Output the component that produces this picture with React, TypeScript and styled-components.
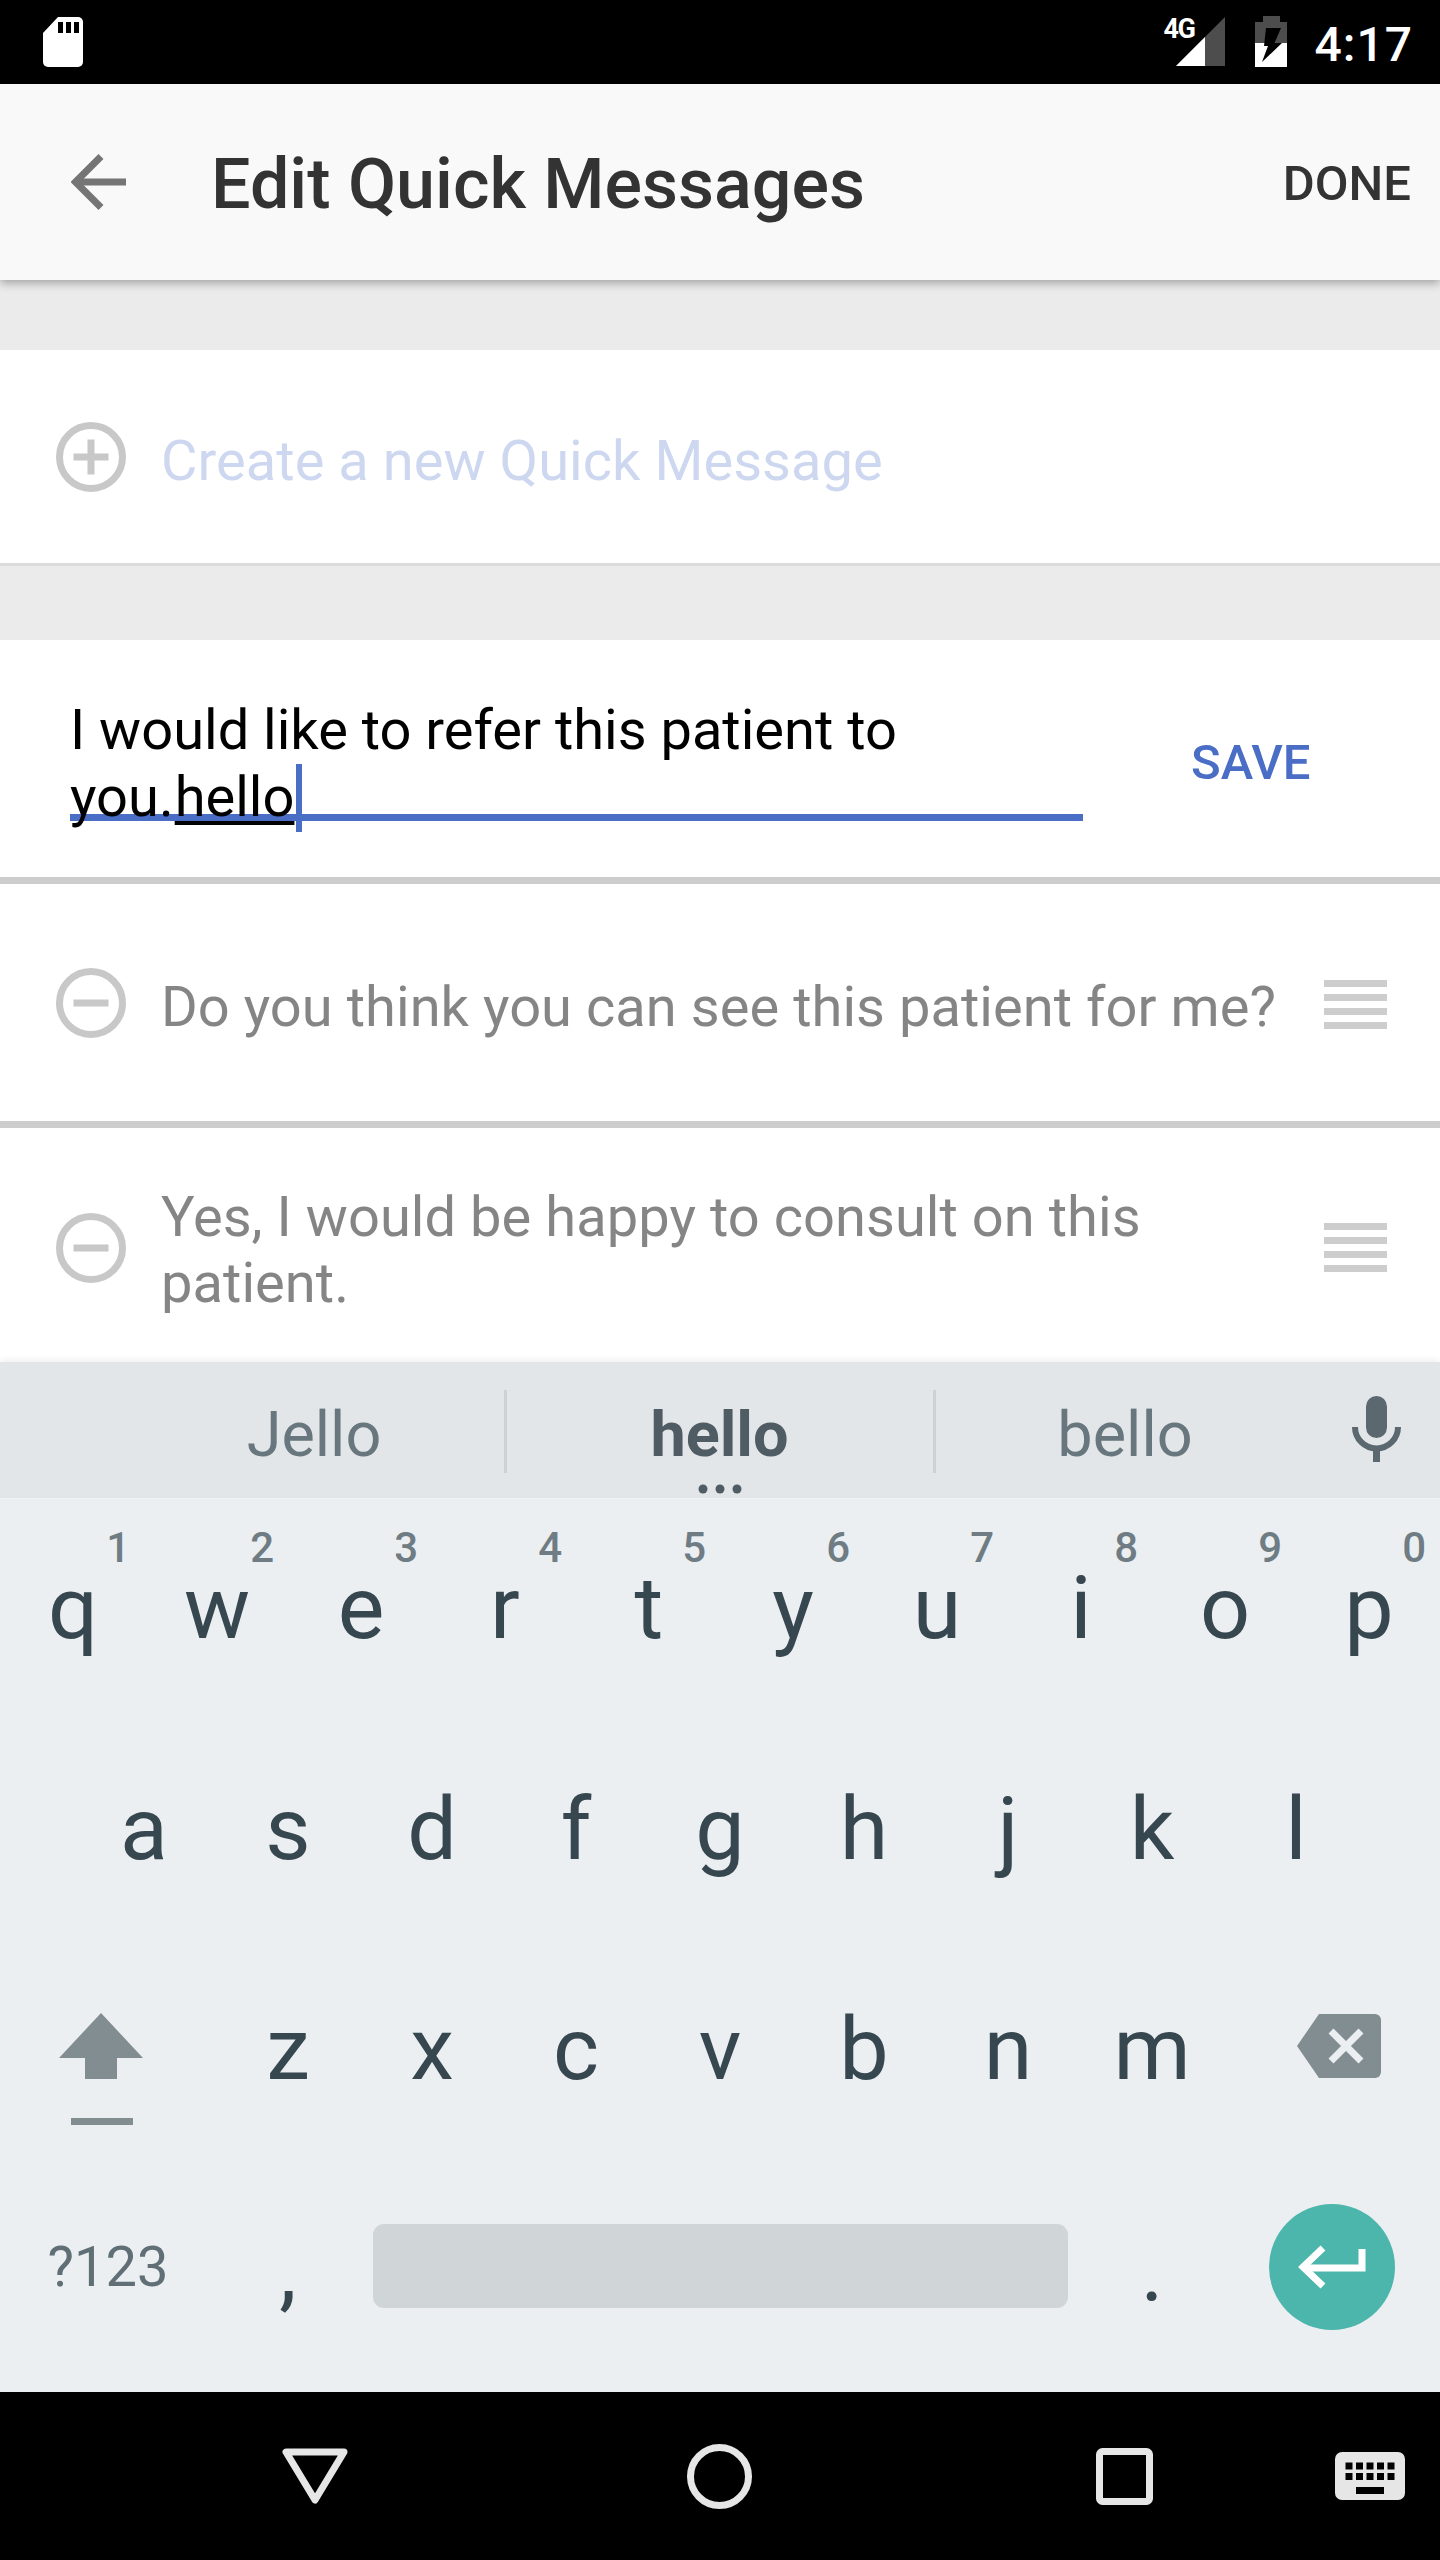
import React from "react";
import styled, { createGlobalStyle } from "styled-components";

const Global = createGlobalStyle`
  html, body { margin: 0; padding: 0; background: #fff; }
  * { box-sizing: border-box; }
`;

const Screen = styled.div`
  width: 1440px;
  height: 2560px;
  display: flex;
  flex-direction: column;
  overflow: hidden;
  background: #ebebeb;
  font-family: Roboto, "Liberation Sans", sans-serif;
`;

const StatusBar = styled.div`
  flex: 0 0 84px;
  display: flex;
  align-items: flex-start;
  padding: 16px 27px 0 43px;
  background: #000;
  color: #fff;
`;

const StatusRight = styled.div`
  margin-left: auto;
  display: flex;
  align-items: flex-start;
`;

const SignalWrap = styled.div`
  position: relative;
  width: 49px;
  height: 50px;
  margin-top: 1px;
  margin-right: 30px;
`;

const NetworkLabel = styled.span`
  position: absolute;
  left: -12px;
  top: -1px;
  font-size: 27px;
  line-height: 26px;
  font-weight: 700;
  letter-spacing: -1.5px;
  color: #fff;
`;

const Clock = styled.span`
  margin-left: 28px;
  margin-top: 1px;
  font-size: 48px;
  line-height: 56px;
  font-weight: 500;
  letter-spacing: 1px;
`;

const Toolbar = styled.header`
  flex: 0 0 196px;
  display: flex;
  align-items: center;
  padding: 0 29px 0 71px;
  background: #f9f9f9;
  position: relative;
  z-index: 2;
  box-shadow: 0 3px 9px rgba(0, 0, 0, 0.32);
`;

const Title = styled.h1`
  margin: 4px 0 0 85px;
  font-size: 70px;
  line-height: 82px;
  font-weight: 500;
  color: #333;
`;

const Done = styled.span`
  margin: 3px 0 0 auto;
  font-size: 49px;
  line-height: 58px;
  font-weight: 500;
  color: #333;
`;

const Band = styled.div<{ $h: number }>`
  flex: 0 0 ${(p) => p.$h}px;
  background: #ebebeb;
`;

const Row = styled.div<{ $h: number; $line: number; $lineColor: string }>`
  flex: 0 0 ${(p) => p.$h + p.$line}px;
  display: flex;
  align-items: center;
  padding: 0 53px 0 56px;
  background: #fff;
  border-bottom: ${(p) => p.$line}px solid ${(p) => p.$lineColor};
`;

const ClippedRow = styled(Row)`
  align-items: flex-start;
  padding-top: 85px;
`;

const RoundIcon = styled.svg`
  flex: 0 0 70px;
  margin-right: 35px;
`;

const RowText = styled.span<{ $color: string }>`
  flex: 1;
  margin-top: 10px;
  font-size: 56px;
  line-height: 65.5px;
  letter-spacing: 0.05px;
  color: ${(p) => p.$color};
`;

const WrapText = styled(RowText)`
  margin-top: -28px;
  padding-right: 160px;
`;

const Handle = styled.svg`
  flex: 0 0 63px;
  margin-top: 4px;
`;

const ClippedHandle = styled(Handle)`
  margin-top: 10px;
`;

const EditRow = styled.div`
  flex: 0 0 244px;
  display: flex;
  align-items: flex-start;
  padding: 58px 0 0 70px;
  background: #fff;
  border-bottom: 7px solid #cdcdcd;
`;

const Input = styled.div`
  width: 1013px;
  height: 123px;
  border-bottom: 7px solid #4a6dc6;
  font-size: 56px;
  line-height: 65.5px;
  color: #000;
  white-space: nowrap;
`;

const Composing = styled.span`
  margin-left: 1px;
  text-decoration: underline;
  text-decoration-thickness: 4px;
  text-underline-offset: 5px;
  text-decoration-skip-ink: none;
`;

const Caret = styled.span`
  display: inline-block;
  width: 6px;
  height: 68px;
  margin-right: -6px;
  margin-left: 2px;
  vertical-align: -16px;
  background: #4a6dc6;
`;

const Save = styled.span`
  margin: 36px 0 0 108px;
  font-size: 49px;
  line-height: 58px;
  font-weight: 500;
  color: #4a6dc6;
`;

const Clip = styled.div`
  flex: 1;
  min-height: 0;
  display: flex;
  flex-direction: column;
  overflow: hidden;
  background: #fff;
`;

const Suggestions = styled.div`
  flex: 0 0 137px;
  display: grid;
  grid-template-columns: 382px 429px 382px 1fr;
  padding-left: 123px;
  background: #e3e6e9;
  border-bottom: 1px solid #f0f2f4;
  position: relative;
  box-shadow: 0 -3px 5px rgba(0, 0, 0, 0.05);
`;

const Suggestion = styled.div<{ $strong?: boolean; $divided?: boolean }>`
  position: relative;
  display: flex;
  justify-content: center;
  padding-top: 36px;
  font-size: 63px;
  line-height: 74px;
  font-weight: ${(p) => (p.$strong ? 700 : 400)};
  color: ${(p) => (p.$strong ? "#4f5c63" : "#68767d")};
  &::before {
    content: "";
    display: ${(p) => (p.$divided ? "block" : "none")};
    position: absolute;
    left: -1px;
    top: 28px;
    width: 3px;
    height: 83px;
    background: #ced2d5;
  }
`;

const MoreDots = styled.svg`
  position: absolute;
  left: 193px;
  top: 122px;
`;

const MicCell = styled.div`
  display: flex;
  justify-content: flex-start;
  padding: 34px 0 0 36px;
`;

const Keyboard = styled.div`
  flex: 0 0 893px;
  padding-top: 3px;
  background: #ebeff2;
  color: #37474f;
`;

const KeyRow = styled.div<{ $inset?: number }>`
  height: 220.5px;
  display: flex;
  padding-left: ${(p) => p.$inset ?? 0}px;
`;

const Key = styled.div`
  position: relative;
  flex: 0 0 144px;
  display: flex;
  justify-content: center;
  padding-top: 62px;
  font-size: 88px;
  line-height: 88px;
`;

const Hint = styled.span`
  position: absolute;
  right: 15px;
  top: 25px;
  font-size: 42px;
  line-height: 42px;
  font-weight: 500;
  color: #6f7c83;
`;

const IconKey = styled.div<{ $left: number; $top: number }>`
  flex: 0 0 216px;
  padding: ${(p) => p.$top}px 0 0 ${(p) => p.$left}px;
`;

const SymbolsKey = styled.div`
  flex: 0 0 216px;
  display: flex;
  justify-content: center;
  padding-top: 70px;
  font-size: 56px;
  line-height: 66px;
  color: #606e75;
`;

const SpaceCell = styled.div`
  flex: 0 0 720px;
  padding: 60px 12px 0 13px;
`;

const SpaceBar = styled.div`
  height: 84px;
  border-radius: 11px;
  background: #d0d5d8;
`;

const EnterCell = styled.div`
  flex: 0 0 216px;
  padding: 40px 0 0 45px;
`;

const EnterButton = styled.div`
  width: 126px;
  height: 126px;
  border-radius: 50%;
  background: #4db6ac;
  display: flex;
  align-items: center;
  justify-content: center;
`;

const NavBar = styled.nav`
  flex: 0 0 168px;
  display: grid;
  grid-template-columns: 405px 405px 405px 1fr;
  align-items: center;
  padding-left: 112px;
  background: #000;
`;

const NavCell = styled.div`
  display: flex;
  justify-content: center;
`;

const NavEnd = styled.div`
  display: flex;
  padding-left: 8px;
`;

const SdIcon = () => (
  <svg width="40" height="52" viewBox="0 0 40 52">
    <path d="M15 1H35a5 5 0 0 1 5 5V46a5 5 0 0 1-5 5H5a5 5 0 0 1-5-5V17Z" fill="#fff" />
    <rect x="15" y="6" width="5" height="11" fill="#000" />
    <rect x="23" y="6" width="5" height="11" fill="#000" />
    <rect x="31" y="6" width="5" height="11" fill="#000" />
  </svg>
);

const SignalIcon = () => (
  <svg width="49" height="50" viewBox="0 0 49 50">
    <polygon points="49,0 49,49 0,49" fill="#4d4d4d" />
    <polygon points="29,20 29,49 0,49" fill="#fff" />
  </svg>
);

const BatteryIcon = () => (
  <svg width="32" height="51" viewBox="0 0 32 51">
    <path d="M8 0H25V6H32V27H0V6H8Z" fill="#4d4d4d" />
    <rect x="0" y="27" width="32" height="24" fill="#fff" />
    <polygon points="11,12 26,12 19.500,27 27,27 7,46 13,30 9,30" fill="#000" />
  </svg>
);

const BackIcon = () => (
  <svg width="55" height="56" viewBox="0 0 55 56">
    <path d="M55 28H6" stroke="#757575" strokeWidth="7" fill="none" />
    <path d="M30 2.500L4.500 28L30 53.500" stroke="#757575" strokeWidth="7" fill="none" />
  </svg>
);

const PlusIcon = () => (
  <RoundIcon width="70" height="70" viewBox="0 0 70 70">
    <circle cx="35" cy="35" r="31.500" stroke="#c8c8c8" strokeWidth="7" fill="none" />
    <rect x="17.500" y="31.500" width="35" height="7" fill="#c8c8c8" />
    <rect x="31.500" y="17.500" width="7" height="35" fill="#c8c8c8" />
  </RoundIcon>
);

const MinusIcon = () => (
  <RoundIcon width="70" height="70" viewBox="0 0 70 70">
    <circle cx="35" cy="35" r="31.500" stroke="#c8c8c8" strokeWidth="7" fill="none" />
    <rect x="17.500" y="31.500" width="35" height="7" fill="#c8c8c8" />
  </RoundIcon>
);

const HandleBars = () => (
  <>
    <rect width="63" height="7" y="0" fill="#cdcdcd" />
    <rect width="63" height="7" y="14" fill="#cdcdcd" />
    <rect width="63" height="7" y="28" fill="#cdcdcd" />
    <rect width="63" height="7" y="42" fill="#cdcdcd" />
  </>
);

const MicIcon = () => (
  <svg width="49" height="66" viewBox="0 0 49 66">
    <rect x="14" y="0" width="21" height="42" rx="10.500" fill="#5b686f" />
    <path d="M3 31a21.500 21.500 0 0 0 43 0" stroke="#5b686f" strokeWidth="6" fill="none" />
    <rect x="21" y="52" width="7" height="14" fill="#5b686f" />
  </svg>
);

const ShiftIcon = () => (
  <svg width="84" height="112" viewBox="0 0 84 112">
    <polygon points="42,0 84,45 58,45 58,66 26,66 26,45 0,45" fill="#828d92" />
    <rect x="12" y="105" width="62" height="7" fill="#828d92" />
  </svg>
);

const BackspaceIcon = () => (
  <svg width="84" height="64" viewBox="0 0 84 64">
    <path d="M22 0H78a6 6 0 0 1 6 6V58a6 6 0 0 1-6 6H22L0 32Z" fill="#828d92" />
    <path d="M34 17L64 47M64 17L34 47" stroke="#ebeff2" strokeWidth="7" fill="none" />
  </svg>
);

const ReturnIcon = () => (
  <svg width="68" height="44" viewBox="0 0 68 44">
    <path d="M64 4V23H6" stroke="#fff" strokeWidth="7" fill="none" />
    <path d="M25 3L5 22L25 41" stroke="#fff" strokeWidth="7" fill="none" />
  </svg>
);

const NavBack = () => (
  <svg width="66" height="56" viewBox="0 0 66 56">
    <path d="M4 4H62L33 52Z" stroke="#e6e6e6" strokeWidth="7" strokeLinejoin="round" fill="none" />
  </svg>
);

const NavHome = () => (
  <svg width="65" height="65" viewBox="0 0 65 65">
    <circle cx="32.500" cy="32.500" r="29" stroke="#e6e6e6" strokeWidth="7" fill="none" />
  </svg>
);

const NavRecent = () => (
  <svg width="57" height="57" viewBox="0 0 57 57">
    <rect x="3.500" y="3.500" width="50" height="50" rx="3" stroke="#e6e6e6" strokeWidth="7" fill="none" />
  </svg>
);

const NavKeyboard = () => (
  <svg width="70" height="48" viewBox="0 0 70 48">
    <rect width="70" height="48" rx="7" fill="#e6e6e6" />
    {[0, 1, 2, 3, 4].map((i) => (
      <React.Fragment key={i}>
        <rect x={10.500 + i * 10.500} y="10.500" width="7" height="7" fill="#000" />
        <rect x={10.500 + i * 10.500} y="21" width="7" height="7" fill="#000" />
      </React.Fragment>
    ))}
    <rect x="21" y="35" width="28" height="7" fill="#000" />
  </svg>
);

const topRow = ["q", "w", "e", "r", "t", "y", "u", "i", "o", "p"];
const digits = ["1", "2", "3", "4", "5", "6", "7", "8", "9", "0"];
const midRow = ["a", "s", "d", "f", "g", "h", "j", "k", "l"];
const lowRow = ["z", "x", "c", "v", "b", "n", "m"];

export default function App() {
  return (
    <Screen>
      <Global />
      <StatusBar>
        <SdIcon />
        <StatusRight>
          <SignalWrap>
            <NetworkLabel>4G</NetworkLabel>
            <SignalIcon />
          </SignalWrap>
          <BatteryIcon />
          <Clock>4:17</Clock>
        </StatusRight>
      </StatusBar>
      <Toolbar>
        <BackIcon />
        <Title>Edit Quick Messages</Title>
        <Done>DONE</Done>
      </Toolbar>
      <Band $h={70} />
      <Row $h={213} $line={3} $lineColor="#dcdcdc">
        <PlusIcon />
        <RowText $color="#cdd8f0">Create a new Quick Message</RowText>
      </Row>
      <Band $h={74} />
      <EditRow>
        <Input>
          I would like to refer this patient to
          <br />
          you.<Composing>hello</Composing>
          <Caret />
        </Input>
        <Save>SAVE</Save>
      </EditRow>
      <Row $h={237} $line={7} $lineColor="#cdcdcd">
        <MinusIcon />
        <RowText $color="#858585">Do you think you can see this patient for me?</RowText>
        <Handle width="63" height="49" viewBox="0 0 63 49">
          <HandleBars />
        </Handle>
      </Row>
      <Clip>
        <ClippedRow $h={240} $line={0} $lineColor="#fff">
          <MinusIcon />
          <WrapText $color="#858585">Yes, I would be happy to consult on this patient.</WrapText>
          <ClippedHandle width="63" height="49" viewBox="0 0 63 49">
            <HandleBars />
          </ClippedHandle>
        </ClippedRow>
      </Clip>
      <Suggestions>
        <Suggestion>Jello</Suggestion>
        <Suggestion $strong $divided>
          hello
          <MoreDots width="55" height="10" viewBox="0 0 55 10">
            <circle cx="5" cy="5" r="4.500" fill="#4f5c63" />
            <circle cx="22" cy="5" r="4.500" fill="#4f5c63" />
            <circle cx="39" cy="5" r="4.500" fill="#4f5c63" />
          </MoreDots>
        </Suggestion>
        <Suggestion $divided>bello</Suggestion>
        <MicCell>
          <MicIcon />
        </MicCell>
      </Suggestions>
      <Keyboard>
        <KeyRow $inset={1}>
          {topRow.map((k, i) => (
            <Key key={k}>
              {k}
              <Hint>{digits[i]}</Hint>
            </Key>
          ))}
        </KeyRow>
        <KeyRow $inset={72}>
          {midRow.map((k) => (
            <Key key={k}>{k}</Key>
          ))}
        </KeyRow>
        <KeyRow>
          <IconKey $left={59} $top={70}>
            <ShiftIcon />
          </IconKey>
          {lowRow.map((k) => (
            <Key key={k}>{k}</Key>
          ))}
          <IconKey $left={73} $top={71}>
            <BackspaceIcon />
          </IconKey>
        </KeyRow>
        <KeyRow>
          <SymbolsKey>?123</SymbolsKey>
          <Key>,</Key>
          <SpaceCell>
            <SpaceBar />
          </SpaceCell>
          <Key>.</Key>
          <EnterCell>
            <EnterButton>
              <ReturnIcon />
            </EnterButton>
          </EnterCell>
        </KeyRow>
      </Keyboard>
      <NavBar>
        <NavCell>
          <NavBack />
        </NavCell>
        <NavCell>
          <NavHome />
        </NavCell>
        <NavCell>
          <NavRecent />
        </NavCell>
        <NavEnd>
          <NavKeyboard />
        </NavEnd>
      </NavBar>
    </Screen>
  );
}
